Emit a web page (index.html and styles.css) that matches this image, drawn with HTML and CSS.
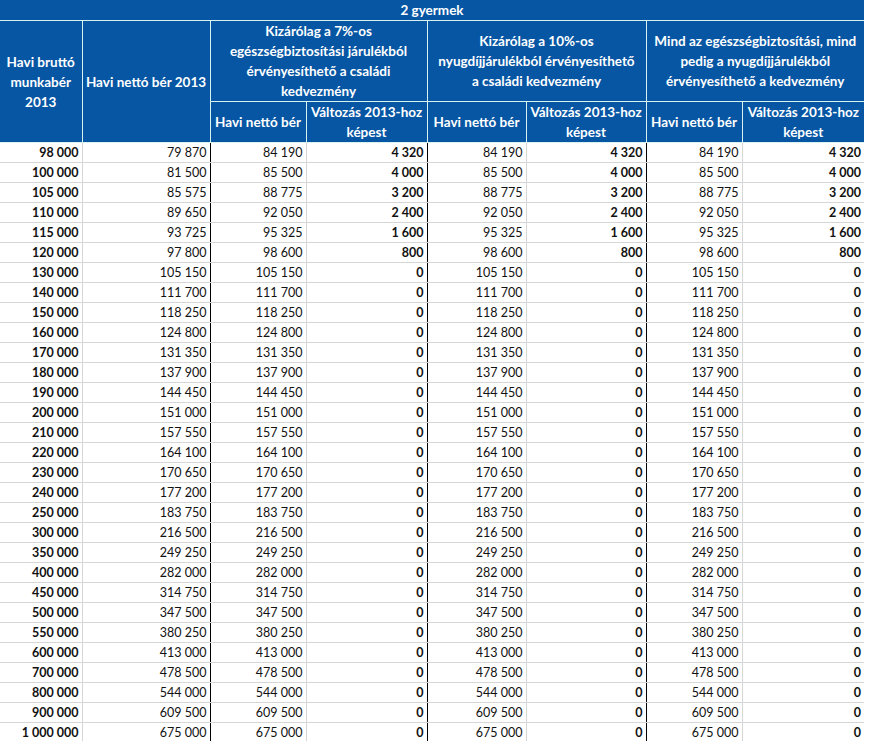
FILE: index.html
```html
<!DOCTYPE html>
<html lang="hu">
<head>
<meta charset="utf-8">
<title>2 gyermek</title>
<link rel="stylesheet" href="styles.css">
</head>
<body>
<table class="sheet">
<colgroup>
<col class="c1"><col class="c2"><col class="c3"><col class="c4"><col class="c5"><col class="c6"><col class="c7"><col class="c8">
</colgroup>
<thead>
<tr class="h1"><th colspan="8">2 gyermek</th></tr>
<tr class="h2">
<th rowspan="2">Havi bruttó munkabér 2013</th>
<th rowspan="2" class="sep">Havi nettó bér 2013</th>
<th colspan="2" class="sep">Kizárólag a 7%-os egészségbiztosítási járulékból érvényesíthető a családi kedvezmény</th>
<th colspan="2" class="sep tight">Kizárólag a 10%-os nyugdíjjárulékból érvényesíthető a családi kedvezmény</th>
<th colspan="2">Mind az egészségbiztosítási, mind pedig a nyugdíjjárulékból érvényesíthető a kedvezmény</th>
</tr>
<tr class="h3">
<th>Havi nettó bér</th><th class="sep">Változás 2013-hoz képest</th>
<th>Havi nettó bér</th><th class="sep">Változás 2013-hoz képest</th>
<th>Havi nettó bér</th><th>Változás 2013-hoz képest</th>
</tr>
</thead>
<tbody>
<tr><td class="b">98 000</td><td class="sep">79 870</td><td>84 190</td><td class="b sep">4 320</td><td>84 190</td><td class="b sep">4 320</td><td>84 190</td><td class="b">4 320</td></tr>
<tr><td class="b">100 000</td><td class="sep">81 500</td><td>85 500</td><td class="b sep">4 000</td><td>85 500</td><td class="b sep">4 000</td><td>85 500</td><td class="b">4 000</td></tr>
<tr><td class="b">105 000</td><td class="sep">85 575</td><td>88 775</td><td class="b sep">3 200</td><td>88 775</td><td class="b sep">3 200</td><td>88 775</td><td class="b">3 200</td></tr>
<tr><td class="b">110 000</td><td class="sep">89 650</td><td>92 050</td><td class="b sep">2 400</td><td>92 050</td><td class="b sep">2 400</td><td>92 050</td><td class="b">2 400</td></tr>
<tr><td class="b">115 000</td><td class="sep">93 725</td><td>95 325</td><td class="b sep">1 600</td><td>95 325</td><td class="b sep">1 600</td><td>95 325</td><td class="b">1 600</td></tr>
<tr><td class="b">120 000</td><td class="sep">97 800</td><td>98 600</td><td class="b sep">800</td><td>98 600</td><td class="b sep">800</td><td>98 600</td><td class="b">800</td></tr>
<tr><td class="b">130 000</td><td class="sep">105 150</td><td>105 150</td><td class="b sep">0</td><td>105 150</td><td class="b sep">0</td><td>105 150</td><td class="b">0</td></tr>
<tr><td class="b">140 000</td><td class="sep">111 700</td><td>111 700</td><td class="b sep">0</td><td>111 700</td><td class="b sep">0</td><td>111 700</td><td class="b">0</td></tr>
<tr><td class="b">150 000</td><td class="sep">118 250</td><td>118 250</td><td class="b sep">0</td><td>118 250</td><td class="b sep">0</td><td>118 250</td><td class="b">0</td></tr>
<tr><td class="b">160 000</td><td class="sep">124 800</td><td>124 800</td><td class="b sep">0</td><td>124 800</td><td class="b sep">0</td><td>124 800</td><td class="b">0</td></tr>
<tr><td class="b">170 000</td><td class="sep">131 350</td><td>131 350</td><td class="b sep">0</td><td>131 350</td><td class="b sep">0</td><td>131 350</td><td class="b">0</td></tr>
<tr><td class="b">180 000</td><td class="sep">137 900</td><td>137 900</td><td class="b sep">0</td><td>137 900</td><td class="b sep">0</td><td>137 900</td><td class="b">0</td></tr>
<tr><td class="b">190 000</td><td class="sep">144 450</td><td>144 450</td><td class="b sep">0</td><td>144 450</td><td class="b sep">0</td><td>144 450</td><td class="b">0</td></tr>
<tr><td class="b">200 000</td><td class="sep">151 000</td><td>151 000</td><td class="b sep">0</td><td>151 000</td><td class="b sep">0</td><td>151 000</td><td class="b">0</td></tr>
<tr><td class="b">210 000</td><td class="sep">157 550</td><td>157 550</td><td class="b sep">0</td><td>157 550</td><td class="b sep">0</td><td>157 550</td><td class="b">0</td></tr>
<tr><td class="b">220 000</td><td class="sep">164 100</td><td>164 100</td><td class="b sep">0</td><td>164 100</td><td class="b sep">0</td><td>164 100</td><td class="b">0</td></tr>
<tr><td class="b">230 000</td><td class="sep">170 650</td><td>170 650</td><td class="b sep">0</td><td>170 650</td><td class="b sep">0</td><td>170 650</td><td class="b">0</td></tr>
<tr><td class="b">240 000</td><td class="sep">177 200</td><td>177 200</td><td class="b sep">0</td><td>177 200</td><td class="b sep">0</td><td>177 200</td><td class="b">0</td></tr>
<tr><td class="b">250 000</td><td class="sep">183 750</td><td>183 750</td><td class="b sep">0</td><td>183 750</td><td class="b sep">0</td><td>183 750</td><td class="b">0</td></tr>
<tr><td class="b">300 000</td><td class="sep">216 500</td><td>216 500</td><td class="b sep">0</td><td>216 500</td><td class="b sep">0</td><td>216 500</td><td class="b">0</td></tr>
<tr><td class="b">350 000</td><td class="sep">249 250</td><td>249 250</td><td class="b sep">0</td><td>249 250</td><td class="b sep">0</td><td>249 250</td><td class="b">0</td></tr>
<tr><td class="b">400 000</td><td class="sep">282 000</td><td>282 000</td><td class="b sep">0</td><td>282 000</td><td class="b sep">0</td><td>282 000</td><td class="b">0</td></tr>
<tr><td class="b">450 000</td><td class="sep">314 750</td><td>314 750</td><td class="b sep">0</td><td>314 750</td><td class="b sep">0</td><td>314 750</td><td class="b">0</td></tr>
<tr><td class="b">500 000</td><td class="sep">347 500</td><td>347 500</td><td class="b sep">0</td><td>347 500</td><td class="b sep">0</td><td>347 500</td><td class="b">0</td></tr>
<tr><td class="b">550 000</td><td class="sep">380 250</td><td>380 250</td><td class="b sep">0</td><td>380 250</td><td class="b sep">0</td><td>380 250</td><td class="b">0</td></tr>
<tr><td class="b">600 000</td><td class="sep">413 000</td><td>413 000</td><td class="b sep">0</td><td>413 000</td><td class="b sep">0</td><td>413 000</td><td class="b">0</td></tr>
<tr><td class="b">700 000</td><td class="sep">478 500</td><td>478 500</td><td class="b sep">0</td><td>478 500</td><td class="b sep">0</td><td>478 500</td><td class="b">0</td></tr>
<tr><td class="b">800 000</td><td class="sep">544 000</td><td>544 000</td><td class="b sep">0</td><td>544 000</td><td class="b sep">0</td><td>544 000</td><td class="b">0</td></tr>
<tr><td class="b">900 000</td><td class="sep">609 500</td><td>609 500</td><td class="b sep">0</td><td>609 500</td><td class="b sep">0</td><td>609 500</td><td class="b">0</td></tr>
<tr><td class="b">1 000 000</td><td class="sep">675 000</td><td>675 000</td><td class="b sep">0</td><td>675 000</td><td class="b sep">0</td><td>675 000</td><td class="b">0</td></tr>
</tbody>
</table>
</body>
</html>
```
FILE: styles.css
```css
html, body {
  margin: 0;
  padding: 0;
  background: #ffffff;
}

.sheet {
  width: 864px;
  table-layout: fixed;
  border-collapse: collapse;
  font-family: Lato, "Open Sans", sans-serif;
  font-size: 12.5px;
  color: #111111;
}

.c1 { width: 82px; }
.c2 { width: 128px; }
.c3 { width: 96px; }
.c4 { width: 121px; }
.c5 { width: 99px; }
.c6 { width: 120px; }
.c7 { width: 96px; }
.c8 { width: 122px; }

.sheet th {
  background: #0656a4;
  color: #ffffff;
  font-weight: 700;
  font-size: 13.5px;
  line-height: 20px;
  padding: 0 2px;
  text-align: center;
  vertical-align: middle;
  border: 1px solid #d8f2f2;
  border-top: none;
}

.sheet th.tight { padding: 0 7px; }

.h1 th {
  height: 19px;
  border-left: none;
  border-right: none;
}

.h2 th { height: 79px; }
.h3 th { height: 38px; }

.h2 th:first-child, .h3 th:first-child { border-left: none; }
.h2 th:last-child, .h3 th:last-child { border-right: none; }

.sheet td {
  height: 19px;
  padding: 0 3px 0 0;
  text-align: right;
  vertical-align: middle;
  line-height: 19px;
  white-space: nowrap;
  border-right: 1px solid #d6d6d6;
  border-bottom: 1px solid #d6d6d6;
}

.sheet td:last-child { border-right: none; }

.sheet td.sep { border-right: 1px solid #000000; }

.sheet td.b { font-weight: 700; }
```
